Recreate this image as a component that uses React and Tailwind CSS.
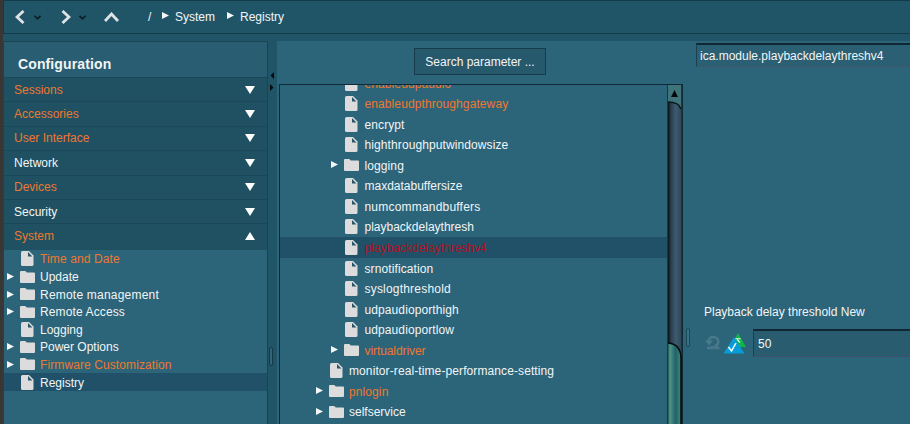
const FileIcon = () => (
  <svg className="h-[15px] w-[13px] shrink-0" viewBox="0 0 13 15">
    <path d="M1.5 0H8L12.5 4.5V13.5Q12.5 15 11 15H1.5Q0 15 0 13.5V1.5Q0 0 1.5 0Z" fill="#dcdcdc" />
    <path d="M7 1V5.6H11.4Z" fill="#285568" />
  </svg>
);

const FolderIcon = () => (
  <svg className="h-[12px] w-[15px] shrink-0" viewBox="0 0 15 12">
    <path d="M1 0H5.3L6.8 1.4H14Q15 1.4 15 2.4V11Q15 12 14 12H1Q0 12 0 11V1Q0 0 1 0Z" fill="#dcdcdc" />
  </svg>
);

const RightArrow = () => (
  <svg className="h-[7px] w-[7px] shrink-0" viewBox="0 0 7 7">
    <path d="M0 0L7 3.5L0 7Z" fill="#f4f6f7" />
  </svg>
);

const sections = [
  { name: "Sessions", hot: true },
  { name: "Accessories", hot: true },
  { name: "User Interface", hot: true },
  { name: "Network" },
  { name: "Devices", hot: true },
  { name: "Security" },
  { name: "System", hot: true, open: true },
];

const systemItems = [
  { name: "Time and Date", hot: true, track: "tracking-[0.12px]" },
  { name: "Update", folder: true },
  { name: "Remote management", folder: true, track: "tracking-[0.21px]" },
  { name: "Remote Access", folder: true, track: "tracking-[0.12px]" },
  { name: "Logging" },
  { name: "Power Options", folder: true },
  { name: "Firmware Customization", folder: true, hot: true, track: "tracking-[0.1px]" },
  { name: "Registry", selected: true },
];

const registryItems = [
  { name: "enableudpaudio", hot: true },
  { name: "enableudpthroughgateway", hot: true },
  { name: "encrypt" },
  { name: "highthroughputwindowsize" },
  { name: "logging", folder: true },
  { name: "maxdatabuffersize", track: "tracking-[0px]" },
  { name: "numcommandbuffers", track: "tracking-[0.2px]" },
  { name: "playbackdelaythresh", track: "tracking-[0px]" },
  { name: "playbackdelaythreshv4", selected: true, track: "tracking-[0px]" },
  { name: "srnotification" },
  { name: "syslogthreshold", track: "tracking-[0.2px]" },
  { name: "udpaudioporthigh" },
  { name: "udpaudioportlow" },
  { name: "virtualdriver", folder: true, hot: true, track: "tracking-[-0.08px]" },
  { name: "monitor-real-time-performance-setting", level: 1 },
  { name: "pnlogin", folder: true, hot: true, level: 1 },
  { name: "selfservice", folder: true, level: 1, track: "tracking-[0px]" },
];

function TopBar() {
  return (
    <header className="flex h-[34px] shrink-0 items-center border border-r-0 border-[#153b4a] bg-[#205568] pl-[11px] pb-px">
      <svg className="h-[14px] w-[10px]" viewBox="0 0 10 14" fill="none" stroke="#dfe3e5" strokeWidth="2.8"><path d="M8.5 1L2 7L8.5 13" /></svg>
      <svg className="ml-[9px] mt-[2px] h-[5px] w-[7px]" viewBox="0 0 7 5" fill="none" stroke="#0b1c25" strokeWidth="1.6"><path d="M.5 .8L3.5 3.8L6.5 .8" /></svg>
      <svg className="ml-[20px] h-[14px] w-[10px]" viewBox="0 0 10 14" fill="none" stroke="#dfe3e5" strokeWidth="2.8"><path d="M1.5 1L8 7L1.5 13" /></svg>
      <svg className="ml-[8px] mt-[2px] h-[5px] w-[7px]" viewBox="0 0 7 5" fill="none" stroke="#0b1c25" strokeWidth="1.6"><path d="M.5 .8L3.5 3.8L6.5 .8" /></svg>
      <svg className="ml-[18px] h-[10px] w-[15px]" viewBox="0 0 15 10" fill="none" stroke="#dfe3e5" strokeWidth="2.8"><path d="M1 9L7.5 2L14 9" /></svg>
      <span className="ml-[29px] w-[14px]">/</span>
      <span className="-mt-[2px] flex"><RightArrow /></span>
      <span className="ml-[6px] w-[52px]">System</span>
      <span className="-mt-[2px] flex"><RightArrow /></span>
      <span className="ml-[6px]">Registry</span>
    </header>
  );
}

function Sidebar() {
  return (
    <aside className="flex w-[265px] shrink-0 flex-col border border-b-0 border-[#1a4454] bg-[#2c6479]">
      <h1 className="flex h-[35px] items-center bg-[#295d71] pl-[14px] pt-[8px] text-[14px] font-bold tracking-[0.12px]">Configuration</h1>
      <div className="bg-[#1f5162]">
        {sections.map((s) => (
          <div key={s.name} className="flex h-[24.4px] items-center justify-between border-t border-[#1b4859] pl-[10px] pr-[12px]">
            <span className={s.hot ? "text-[#ee7830]" : ""}>{s.name}</span>
            <svg className="h-[8px] w-[10px]" viewBox="0 0 10 8">
              <path d={s.open ? "M0 8L5 0L10 8Z" : "M0 0L5 8L10 0Z"} fill="#fff" />
            </svg>
          </div>
        ))}
        <div className="h-[2.4px]" />
      </div>
      <div>
        {systemItems.map((s) => (
          <div key={s.name} className={"flex h-[17.6px] items-center pl-[3px] " + (s.selected ? "bg-[#215069]" : "")}>
            <span className="w-[13px]">{s.folder && <RightArrow />}</span>
            <span className="flex w-[20px]">{s.folder ? <FolderIcon /> : <span className="ml-px flex"><FileIcon /></span>}</span>
            <span className={"whitespace-nowrap pt-px " + (s.track || "") + (s.hot ? " text-[#ee7830]" : "")}>{s.name}</span>
          </div>
        ))}
      </div>
    </aside>
  );
}

function LeftDivider() {
  return (
    <div className="flex w-[9px] shrink-0 flex-col items-start">
      <svg className="mt-[31px] h-[20px] w-[7px]" viewBox="0 0 7 20"><path d="M6 0V7L2.5 3.5ZM2 12V19L5.5 15.5Z" fill="#06090b" /></svg>
      <div className="ml-[1px] mt-[255px] h-[19px] w-[4px] rounded-[2px] border border-[#143946] bg-[#356477]" />
    </div>
  );
}

function RegistryTree() {
  return (
    <div className="ml-[2px] mt-[9px] flex min-h-0 w-[404px] flex-1 border border-b-0 border-[#102a35]">
      <div className="flex-1 overflow-hidden">
        <div className="-mt-[12.2px]">
          {registryItems.map((s) => (
            <div key={s.name} className={"flex h-[20.55px] items-center " + (s.level ? "pl-[36px] " : "pl-[51px] ") + (s.selected ? "bg-[#215069]" : "")}>
              <span className="-mt-px flex w-[13px]">{s.folder && <RightArrow />}</span>
              <span className={"flex " + (s.level ? "w-[20px]" : "w-[20.5px]")}>{s.folder ? <FolderIcon /> : <span className="ml-px flex"><FileIcon /></span>}</span>
              <span className={"whitespace-nowrap pt-px " + (s.track || "tracking-[0.1px]") + (s.selected ? " text-[#b0101f]" : s.hot ? " text-[#ee7830]" : "")}>{s.name}</span>
            </div>
          ))}
        </div>
      </div>
      <svg className="h-[340px] w-[15px] shrink-0" viewBox="0 0 15 340">
        <defs>
          <linearGradient id="track"><stop offset="0" stopColor="#0a1318" /><stop offset=".25" stopColor="#2b4152" /><stop offset=".6" stopColor="#3d5b70" /><stop offset="1" stopColor="#304858" /></linearGradient>
          <linearGradient id="thumb"><stop offset="0" stopColor="#1d594f" /><stop offset=".15" stopColor="#559388" /><stop offset=".4" stopColor="#30777b" /><stop offset=".6" stopColor="#246164" /><stop offset="1" stopColor="#3c8d87" /></linearGradient>
        </defs>
        <rect width="15" height="340" fill="#1b3541" />
        <rect x="1" width="13" height="340" fill="url(#track)" />
        <path d="M1 0H14V24Q12 17 1 17Z" fill="#3e7479" />
        <path d="M1 17Q12 17 14 24" fill="none" stroke="#0b171c" strokeWidth="1.5" />
        <path d="M4 12L7.5 5L11 12Z" fill="#050808" />
        <path d="M1 258Q14 259 14 274V340H1Z" fill="url(#thumb)" />
        <path d="M1 258Q14 259 14 274V340" fill="none" stroke="#06090a" strokeWidth="1.5" />
      </svg>
    </div>
  );
}

function Detail() {
  return (
    <section className="flex min-w-0 flex-1 flex-col">
      <div className="ml-[4px] mt-[2px] flex h-[24px] items-center border border-r-0 border-t-2 border-t-[#102833] border-l-[#1b4150] border-b-[#41586c] bg-[#2a5f74] pl-[3px]">ica.module.playbackdelaythreshv4</div>
      <div className="ml-[12px] mt-[237px] h-[16px] leading-[16px]">Playback delay threshold New</div>
      <div className="ml-[12px] mt-[9px] flex items-center">
        <svg className="ml-px mt-[-1px] h-[15px] w-[16px]" viewBox="0 0 16 15" fill="none" stroke="#4a798b" strokeWidth="2.6">
          <path d="M3.5 6.5C3.8 3.6 5.7 2 8.4 2C11.3 2 13.3 4 13.3 6.7C13.3 8.8 12.2 10 10.6 11V13H14.5" />
          <path d="M2 13H7.5V11" />
          <path d="M0 5.5H8L4 10.5Z" fill="#4a798b" stroke="none" />
        </svg>
        <svg className="ml-[2px] h-[21px] w-[23px]" viewBox="0 0 23 21">
          <path d="M15 0L23 14H7Z" fill="#10b548" />
          <path d="M11 4L21.5 20.5H.5Z" fill="#079bd8" />
          <path d="M5.5 14L8.5 18L13 10" fill="none" stroke="#fff" strokeWidth="1.5" />
          <path d="M12.6 5.8H17.6M14.2 6.5L17 9.5" fill="none" stroke="#e8f5ec" strokeWidth="1.1" />
        </svg>
        <div className="ml-[7px] flex h-[28px] flex-1 items-center border border-r-0 border-t-2 border-t-[#102833] border-l-[#1b4150] border-b-[#41506a] bg-[#295c6f] pl-[4px] text-[12px]">50</div>
      </div>
    </section>
  );
}

export default function App() {
  return (
    <div className="flex h-[424px] w-[910px] overflow-hidden bg-[#393736] font-['Liberation_Sans',Arial,sans-serif] text-[12px] leading-none text-[#f2f5f6]">
      <div className="ml-[3px] flex min-w-0 flex-1 flex-col bg-[#205568]">
        <TopBar />
        <main className="mt-[7px] flex min-h-0 flex-1">
          <Sidebar />
          <LeftDivider />
          <div className="flex min-w-0 flex-1 bg-[#2c6479]">
            <section className="flex w-[409px] shrink-0 flex-col">
              <button className="ml-[137px] mt-[7px] h-[27px] w-[132px] shrink-0 border border-[#173b4a] bg-[#27596d]">Search parameter ...</button>
              <RegistryTree />
            </section>
            <div className="w-[6px] shrink-0">
              <div className="mt-[287px] h-[19px] w-[4px] rounded-[2px] border border-[#1d4655] bg-[#3b7185]" />
            </div>
            <Detail />
          </div>
        </main>
      </div>
    </div>
  );
}
